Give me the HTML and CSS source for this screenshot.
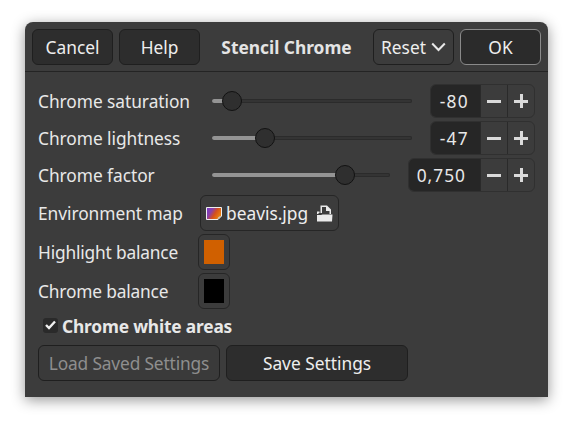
FILE: index.html
```html
<!DOCTYPE html>
<html lang="en">
<head>
<meta charset="utf-8">
<title>Stencil Chrome</title>
<link rel="stylesheet" href="styles.css">
</head>
<body>
<div class="window">
  <header class="header">
    <button class="btn header-btn">Cancel</button>
    <button class="btn header-btn">Help</button>
    <h1 class="title">Stencil Chrome</h1>
    <button class="btn header-btn btn-light reset">Reset
      <svg class="chev" width="15" height="10" viewBox="0 0 15 10"><path d="M1.2 1.5 7.5 8 13.8 1.5" fill="none" stroke="#e8e8e8" stroke-width="2"/></svg>
    </button>
    <button class="btn header-btn btn-ok">OK</button>
  </header>
  <main class="content">
    <div class="row row-spin">
      <span class="label">Chrome saturation</span>
      <div class="slider"><div class="fill" style="width:10%"></div><div class="knob" style="left:10%"></div></div>
      <div class="spin"><span class="spin-value">-80</span><span class="spin-btn"><i class="minus"></i></span><span class="spin-btn"><i class="plus"></i></span></div>
    </div>
    <div class="row row-spin">
      <span class="label">Chrome lightness</span>
      <div class="slider"><div class="fill" style="width:26.5%"></div><div class="knob" style="left:26.5%"></div></div>
      <div class="spin"><span class="spin-value">-47</span><span class="spin-btn"><i class="minus"></i></span><span class="spin-btn"><i class="plus"></i></span></div>
    </div>
    <div class="row row-spin">
      <span class="label">Chrome factor</span>
      <div class="slider slider-short"><div class="fill" style="width:74.7%"></div><div class="knob" style="left:74.7%"></div></div>
      <div class="spin spin-wide"><span class="spin-value">0,750</span><span class="spin-btn"><i class="minus"></i></span><span class="spin-btn"><i class="plus"></i></span></div>
    </div>
    <div class="row row-file">
      <span class="label">Environment map</span>
      <button class="btn-file">
        <svg class="thumb" width="16" height="13" viewBox="0 0 16 13">
          <defs><linearGradient id="g" x1="0" y1=".25" x2="1" y2=".75"><stop offset="0" stop-color="#7a3cc0"/><stop offset=".28" stop-color="#8a40a8"/><stop offset=".55" stop-color="#d4501c"/><stop offset="1" stop-color="#f0900c"/></linearGradient></defs>
          <path d="M.5 .5H15.500V9L12 12.500H.5Z" fill="url(#g)" stroke="#f0f0f0"/>
          <path d="M11.500 12.500C11.500 10.500 13 9 15.500 9Z" fill="#c8c8c8"/>
        </svg>
        <span>beavis.jpg</span>
        <svg class="open" width="17" height="17" viewBox="0 0 17 17"><path d="M4.500 .5H11L15 4.500V9H13.500V6H10V2H6V8H4.500ZM1 6.500H3.500V8H2.500V9H1ZM1 16.500V10H5L6.500 9.500H16.500L16 16.500Z" fill="#eaeaea"/></svg>
      </button>
    </div>
    <div class="row row-color">
      <span class="label label-tight">Highlight balance</span>
      <div class="swatch"><span class="chip chip-orange"></span></div>
    </div>
    <div class="row row-color">
      <span class="label label-tight">Chrome balance</span>
      <div class="swatch"><span class="chip chip-black"></span></div>
    </div>
    <label class="check">
      <span class="box"><svg width="11" height="10" viewBox="0 0 11 10"><path d="M1 5 4 8 10 1.5" fill="none" stroke="#f0f0f0" stroke-width="2.4"/></svg></span>
      <span class="check-text">Chrome white areas</span>
    </label>
    <div class="actions">
      <button class="btn action" disabled>Load Saved Settings</button>
      <button class="btn action">Save Settings</button>
    </div>
  </main>
</div>
</body>
</html>
```
FILE: styles.css
```css
* { box-sizing: border-box; }
html, body { margin: 0; height: 100%; background: #fff; overflow: hidden; }
body { padding: 22px 25px 28px; font-family: "Noto Sans", sans-serif; font-size: 17.33px; color: #e8e8e8; }
.window {
  width: 523px; height: 375px; background: #3c3c3c;
  border-radius: 8px 8px 0 0;
  box-shadow: 0 3px 14px rgba(0,0,0,.42);
  display: flex; flex-direction: column;
}
.header {
  height: 50px; padding: 7px 7px 6px; border-bottom: 1px solid #242424;
  display: flex; align-items: stretch; gap: 6px;
}
.title { flex: 1; margin: 0; font-size: 17.33px; font-weight: 700; text-align: center; line-height: 36px; color: #e4e4e4; }
.btn {
  font: inherit; color: #eee; background: #2d2d2d; border: 1px solid #1f1f1f; border-radius: 6px; padding: 0;
}
.header-btn { width: 81px; height: 36px; }
.btn-light { background: #3c3c3c; display: flex; align-items: center; justify-content: center; gap: 5px; }
.btn-ok { background: #2b2b2b; border-color: #8a8a8a; }
.content { flex: 1; padding: 12px 13px 16px 13px; display: flex; flex-direction: column; }
.row { display: flex; align-items: center; }
.row-spin { height: 34px; margin-bottom: 3px; }
.label { width: 174px; flex: none; letter-spacing: -.05px; }
.label-tight { letter-spacing: -.18px; }
.slider { position: relative; width: 199.5px; height: 4px; background: #343434; border-radius: 2px; box-shadow: inset 0 0 0 1px #2b2b2b; }
.slider-short { width: 178px; }
.fill { height: 100%; background: #949494; border-radius: 2px; }
.knob {
  position: absolute; top: 50%; width: 20px; height: 20px; margin: -10px 0 0 -10px;
  border-radius: 50%; background: #2f2f2f; border: 1px solid #121212;
}
.spin { margin-left: auto; width: 105px; height: 34px; display: flex; border: 1px solid #303030; border-radius: 6px; background: #3c3c3c; }
.spin-wide { width: 127px; }
.spin-value { flex: 1; background: #262626; border-radius: 5px 0 0 5px; text-align: right; padding-right: 11px; line-height: 32px; letter-spacing: 1.3px; }
.spin-wide .spin-value { padding-right: 14px; letter-spacing: 1px; }
.spin-btn { position: relative; width: 27px; border-left: 1px solid #2a2a2a; display: flex; align-items: center; justify-content: center; }
.minus, .plus { position: relative; display: block; width: 14px; height: 3px; background: #dadada; }
.plus::after { content: ""; position: absolute; left: 5.5px; top: -5.5px; width: 3px; height: 14px; background: #dadada; }
.row-file { height: 36px; margin-bottom: 3px; }
.btn-file {
  margin-left: -12px; width: 139px; height: 36px; padding: 0 5px; font: inherit; color: #eee; background: #3c3c3c;
  border: 1px solid #262626; border-radius: 6px; display: flex; align-items: center; gap: 4px;
}
.open { margin-left: auto; }
.row-color { height: 36px; margin-bottom: 3px; }
.swatch { margin-left: -14px; width: 32px; height: 36px; border: 1px solid #262626; border-radius: 6px; display: flex; align-items: center; justify-content: center; }
.chip { width: 20px; height: 24px; }
.chip-orange { background: #d06000; }
.chip-black { background: #000; }
.check { display: flex; align-items: center; gap: 4px; height: 22px; margin: 3px 0 8px 5px; font-weight: 700; }
.check-text { letter-spacing: -.17px; }
.box { width: 15px; height: 15px; margin-top: -2px; background: #2a2a2a; border-radius: 3px; display: flex; align-items: center; justify-content: center; }
.actions { display: flex; gap: 6px; }
.action { width: 182px; height: 36px; }
.action:disabled { background: #3a3a3a; color: #8e8e8e; letter-spacing: -.15px; }
```
